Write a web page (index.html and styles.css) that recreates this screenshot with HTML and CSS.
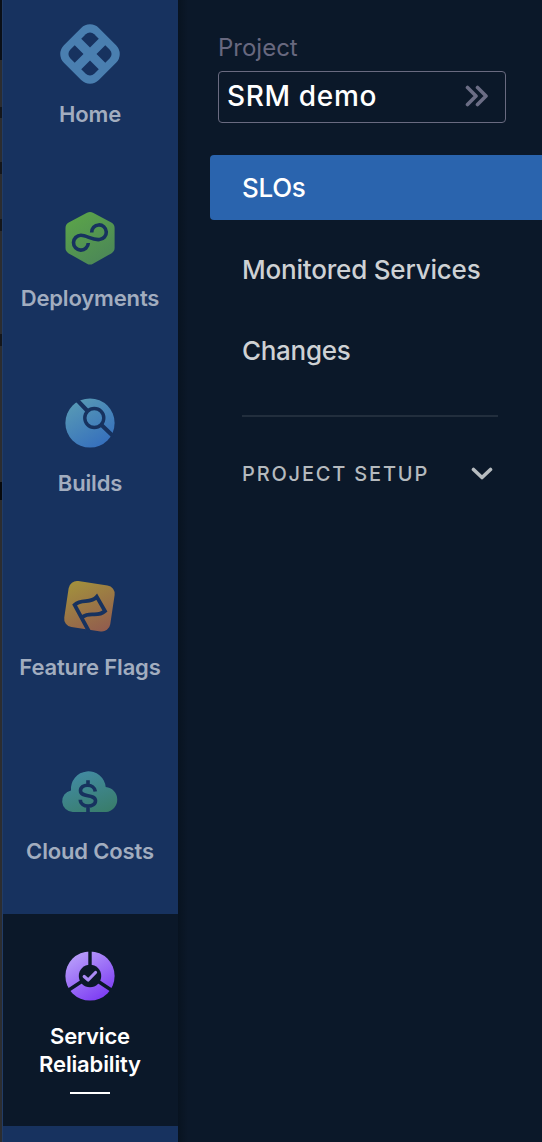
FILE: index.html
```
<!DOCTYPE html>
<html lang="en">
<head>
<meta charset="utf-8">
<title>SRM demo</title>
<link rel="stylesheet" href="styles.css">
</head>
<body>
<div class="app">
  <div class="page-edge"></div>
  <nav class="rail">
    <a class="module">
      <svg class="icon" viewBox="0 0 60 60">
        <g transform="rotate(45 30 30)">
          <rect x="5.3" y="5.3" width="49.4" height="49.4" rx="12.500" fill="#4a7fb0"/>
          <g class="cut-fill">
            <path d="M13 25.400V19a6 6 0 0 1 6-6h6.400v12.400z"/>
            <path d="M34.600 13h6.400a6 6 0 0 1 6 6v6.400H34.600z"/>
            <path d="M47 34.600v6.400a6 6 0 0 1-6 6h-6.400V34.600z"/>
            <path d="M25.400 47h-6.400a6 6 0 0 1-6-6v-6.400h12.400z"/>
          </g>
        </g>
      </svg>
      <span class="label">Home</span>
    </a>
    <a class="module">
      <svg class="icon" viewBox="0 0 60 60">
        <defs><linearGradient id="green" x1="0.2" y1="0" x2="0.8" y2="1"><stop offset="0" stop-color="#5ba449"/><stop offset="1" stop-color="#4b8658"/></linearGradient></defs>
        <path d="M27 4.8Q30 3 33 4.8L51.3 14.6Q54.6 16.5 54.6 20V40Q54.6 43.500 51.3 45.400L33 55.700Q30 57.400 27 55.700L8.700 45.400Q5.500 43.500 5.500 40V20Q5.500 16.500 8.700 14.600Z" fill="url(#green)"/>
        <path class="cut" stroke-width="3.600" d="M28.300 35A7.400 7.400 0 1 1 21 27.300C26.500 27.300 33 32.500 39.500 31.500A7.300 7.300 0 1 0 31.700 24.500"/>
      </svg>
      <span class="label">Deployments</span>
    </a>
    <a class="module">
      <svg class="icon" viewBox="0 0 60 60">
        <defs><linearGradient id="blue" x1="0.200" y1="0.050" x2="0.750" y2="0.950"><stop offset="0" stop-color="#5799b5"/><stop offset="1" stop-color="#3670bd"/></linearGradient></defs>
        <circle cx="30" cy="30" r="24.600" fill="url(#blue)"/>
        <path class="cut" stroke-width="4" d="M17.500 7.500L28 18.500M41 31.500L53.500 43.500"/>
        <circle class="cut" cx="34.300" cy="25" r="9.500" stroke-width="3.400"/>
      </svg>
      <span class="label">Builds</span>
    </a>
    <a class="module">
      <svg class="icon" viewBox="0 0 60 60">
        <defs><linearGradient id="amber" x1="0.200" y1="0" x2="0.850" y2="1"><stop offset="0" stop-color="#a28f3d"/><stop offset="1" stop-color="#925d4e"/></linearGradient></defs>
        <rect x="6.200" y="6" width="46.500" height="46.500" rx="8.500" transform="rotate(8.500 29.500 29.200)" fill="url(#amber)"/>
        <path class="cut" stroke-width="3.800" d="M29.300 55L14.600 27.800C22 21 30.500 27.500 36.800 19.800L45 34C37 41 30.500 34 22.300 40"/>
      </svg>
      <span class="label">Feature Flags</span>
    </a>
    <a class="module">
      <svg class="icon" viewBox="0 0 60 60">
        <defs><linearGradient id="teal" x1="0.300" y1="0" x2="0.800" y2="1"><stop offset="0" stop-color="#428ba3"/><stop offset="1" stop-color="#397d6b"/></linearGradient></defs>
        <path d="M12.800 51A10.900 10.900 0 0 1 11 29.400A17.300 17.300 0 0 1 45.700 26.100A12.500 12.500 0 0 1 46 51Z" fill="url(#teal)"/>
        <path class="cut" stroke-width="3.600" d="M28 19.200V23.700M28 45.700V52.700M35.300 30.500C34.500 22.300 20.500 22.100 20.500 29.800C20.500 37 35.500 32.300 35.500 39.800C35.500 47 20.500 47 20.300 38.800"/>
      </svg>
      <span class="label">Cloud Costs</span>
    </a>
    <a class="module selected">
      <svg class="icon" viewBox="0 0 60 60">
        <defs><linearGradient id="violet" x1="0.150" y1="0.100" x2="0.700" y2="1"><stop offset="0" stop-color="#b79cfa"/><stop offset="1" stop-color="#7d3cf3"/></linearGradient></defs>
        <circle cx="30" cy="30" r="24.600" fill="url(#violet)"/>
        <path class="cut" stroke-width="3.400" d="M30 4V30L8 44.500M30 30L52 44.500"/>
        <circle class="cut-fill" cx="30" cy="30" r="11.200"/>
        <path d="M24.200 30.500L28.200 34L35.500 26.500" fill="none" stroke="#aa8af5" stroke-width="3.200" stroke-linecap="round" stroke-linejoin="round"/>
      </svg>
      <span class="label">Service Reliability</span>
      <span class="underline"></span>
    </a>
  </nav>
  <aside class="panel">
    <div class="project">
      <span class="caption">Project</span>
      <div class="selector">
        <span>SRM demo</span>
        <svg class="chevrons" viewBox="0 0 24 22"><path d="M2.500 2.500L11 11L2.500 19.500M12.500 2.500L21 11L12.500 19.500"/></svg>
      </div>
    </div>
    <a class="link active">SLOs</a>
    <a class="link monitored">Monitored Services</a>
    <a class="link">Changes</a>
    <div class="setup">
      <span>PROJECT SETUP</span>
      <svg class="chevron" viewBox="0 0 22 14"><path d="M2.500 2.500L11 10.500L19.500 2.500"/></svg>
    </div>
  </aside>
</div>
</body>
</html>
```
FILE: styles.css
```
* { box-sizing: border-box; }
body {
  margin: 0;
  background: #0b1829;
  font-family: Inter, "Liberation Sans", sans-serif;
}
.app {
  display: flex;
  width: 542px;
  height: 1142px;
  overflow: hidden;
}
.page-edge {
  flex: 0 0 2px;
  background: linear-gradient(#0a0f17 60px, #2c2d30 60px 107px, #14161a 107px 118px, #2c2d30 118px 162px, #14161a 162px 174px, #2c2d30 174px 219px, #14161a 219px 231px, #2c2d30 231px 334px, #14161a 334px 346px, #2c2d30 346px 482px, #07090c 482px 500px, #2c2d30 500px);
}
.rail {
  flex: 0 0 176px;
  display: flex;
  flex-direction: column;
  height: 1150px;
  margin-top: -8px;
  background: #17325f;
  border-left: 1px solid #223c66;
}
.module {
  --surface: #17325f;
  flex: 0 0 184.300px;
  display: flex;
  flex-direction: column;
  align-items: center;
  padding: 32px 1px 0 0;
  color: #a2adbf;
}
.module.selected {
  --surface: #0b1829;
  flex-basis: 212px;
  margin-top: 0.500px;
  background: var(--surface);
  color: #fff;
}
.icon { width: 60px; height: 60px; flex: none; }
.cut { fill: none; stroke: var(--surface); }
.cut-fill { fill: var(--surface); }
.label {
  margin-top: 16px;
  font-size: 22px;
  line-height: 28px;
  font-weight: 600;
  letter-spacing: -0.150px;
  text-align: center;
}
.selected .label { width: 120px; }
.underline {
  width: 40px;
  height: 2px;
  margin-top: 14px;
  background: #fff;
}
.panel {
  flex: 1;
  padding-left: 32px;
  background: linear-gradient(90deg, #081320, #0b1829 10px);
}
.project { padding: 32px 36px 32px 8px; }
.caption {
  display: block;
  height: 39px;
  font-size: 24px;
  line-height: 31px;
  color: #68687f;
}
.selector {
  display: flex;
  align-items: center;
  justify-content: space-between;
  height: 52px;
  padding: 0 16.500px 2px 8px;
  border: 1px solid #696a80;
  border-radius: 4px;
  color: #fff;
  font-size: 28px;
  font-weight: 500;
  letter-spacing: 0.650px;
}
.chevrons { width: 24px; height: 22px; }
.chevrons path, .chevron path {
  fill: none;
  stroke: #6b6d85;
  stroke-width: 3.600;
  stroke-linecap: round;
  stroke-linejoin: round;
}
.link {
  display: flex;
  align-items: center;
  height: 65px;
  margin-bottom: 16.500px;
  padding-left: 32px;
  color: #ced1d4;
  font-size: 26px;
  font-weight: 500;
  letter-spacing: -0.300px;
}
.monitored { letter-spacing: -0.200px; }
.active {
  background: #2a64ae;
  border-radius: 4px 0 0 4px;
  color: #fff;
}
.setup {
  display: flex;
  align-items: center;
  justify-content: space-between;
  width: 256px;
  height: 118px;
  margin: 31.500px 0 0 32px;
  padding: 0 5px 2px 0;
  border-top: 2px solid #222e3d;
  color: #b5babe;
  font-size: 20px;
  font-weight: 500;
  letter-spacing: 1.820px;
}
.chevron { width: 22px; height: 14px; }
.chevron path { stroke: #b7bcc0; }
```
